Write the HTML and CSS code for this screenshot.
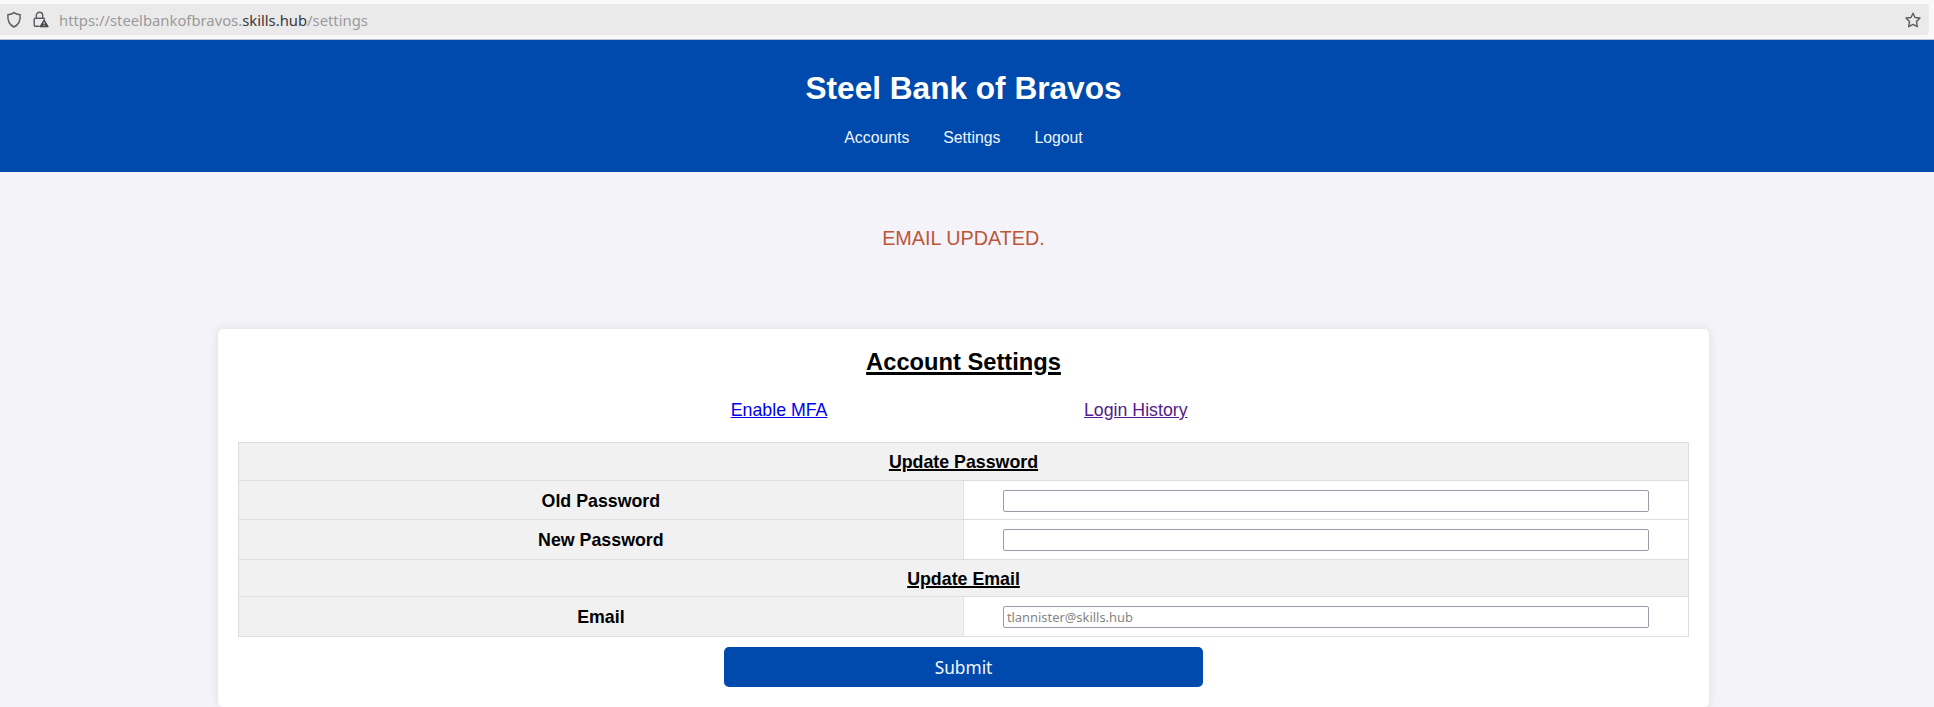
FILE: index.html
```html
<!DOCTYPE html>
<html lang="en">
<head>
<meta charset="utf-8">
<title>Steel Bank of Bravos</title>
<link rel="stylesheet" href="styles.css">
</head>
<body>
<div class="toolbar">
  <div class="address">
    <svg class="shield" viewBox="0 0 16 18" width="16" height="18"><path d="M8 1.600C6.300 3 4 3.500 1.900 3.700 1.400 9.500 3.200 13.700 8 16c4.800-2.300 6.600-6.500 6.100-12.300C12 3.500 9.700 3 8 1.600z"/></svg>
    <svg class="lock" viewBox="0 0 16 17" width="16" height="17"><path d="M3.300 7V4.500a3.200 3.200 0 0 1 6.400 0V7M6.500 15.300H2.600a1.400 1.400 0 0 1-1.400-1.400V8.600a1.400 1.400 0 0 1 1.400-1.400h7.800a1.400 1.400 0 0 1 1.300 1.200"/><path class="warn" d="M11.100 8.800 15.300 15.800H6.900z"/><path class="mark" d="M11.100 11v2.300M11.100 14v1"/></svg>
    <span class="url">https://steelbankofbravos.<span class="domain">skills.hub</span>/settings</span>
    <svg class="star" viewBox="0 0 16 16" width="16" height="16"><path d="M8 1.200 10 5.500 15 6 11.500 9.600 12.300 14.700 8 12.400 3.700 14.700 4.500 9.600 1 6 6 5.500z"/></svg>
  </div>
</div>
<header class="header">
  <h1 class="brand">Steel Bank of Bravos</h1>
  <nav class="nav"><a href="#">Accounts</a><a href="#">Settings</a><a href="#">Logout</a></nav>
</header>
<main class="page">
  <p class="status">EMAIL UPDATED.</p>
  <section class="card">
    <h2 class="title">Account Settings</h2>
    <div class="links"><a class="mfa" href="#">Enable MFA</a><a class="history" href="#">Login History</a></div>
    <form class="form">
      <div class="table">
        <div class="row section">Update Password</div>
        <div class="row"><label class="label" for="old">Old Password</label><div class="cell"><input id="old" type="password"></div></div>
        <div class="row"><label class="label" for="new">New Password</label><div class="cell"><input id="new" type="password"></div></div>
        <div class="row section">Update Email</div>
        <div class="row"><label class="label" for="email">Email</label><div class="cell"><input id="email" type="text" placeholder="tlannister@skills.hub"></div></div>
      </div>
      <button class="submit" type="button">Submit</button>
    </form>
  </section>
</main>
</body>
</html>
```
FILE: styles.css
```css
* { box-sizing: border-box; }
body {
  margin: 0;
  height: 707px;
  overflow: hidden;
  background: #f4f3f9;
  color: #000;
  font-family: "Liberation Sans", Arial, sans-serif;
}
.toolbar {
  height: 40px;
  padding: 4px 5px 4px 0;
  background: #f9f9fb;
  border-bottom: 1px solid #b9c3d4;
}
.address {
  display: flex;
  align-items: center;
  height: 31px;
  padding: 0 8px 0 6px;
  background: #eaeaea;
  border-radius: 0 4px 4px 0;
}
.address svg { flex: none; fill: none; stroke: #5b5b60; stroke-width: 1.400; }
.address .lock { margin-left: 11px; }
.lock .warn { fill: #45454a; stroke: #45454a; stroke-width: 1; stroke-linejoin: round; }
.lock .mark { stroke: #eaeaea; stroke-width: 1; }
.star { margin-left: auto; stroke-linejoin: round; }
.url {
  margin-left: 10px;
  color: #9a9a9c;
  font: 14.800px "Noto Sans", sans-serif;
  white-space: nowrap;
}
.domain { color: #38383d; }
.header {
  height: 132px;
  padding: 30px 7px 0 0;
  background: #004aad;
  color: #fff;
  text-align: center;
}
.brand { margin: 0; font-size: 31.600px; line-height: 37px; }
.nav { display: flex; justify-content: center; gap: 34px; margin-top: 22px; }
.nav a { color: #f0f4fb; font-size: 15.800px; line-height: 18px; text-decoration: none; }
.page { padding-right: 7px; }
.status {
  margin: 0;
  padding-top: 54px;
  color: #bd5637;
  font-size: 19.800px;
  line-height: 24px;
  text-align: center;
}
.card {
  width: 1490.500px;
  height: 378px;
  margin: 79px auto 0;
  padding: 19px 20px 0;
  background: #fff;
  border-radius: 5px;
  box-shadow: 0 0 10px rgba(0, 0, 0, .1);
}
.title { margin: 0; font-size: 23.700px; line-height: 28px; text-align: center; text-decoration: underline 2.500px; }
.links { display: flex; margin-top: 23px; padding-left: 492.500px; gap: 256.500px; font-size: 17.750px; line-height: 22px; }
.mfa { color: #0000ee; }
.history { color: #551a8b; }
.table { display: grid; grid-template-rows: 38px 39px 40px 37px 40px; margin-top: 21px; border: solid #ddd; border-width: 1px 1px 0; font-size: 17.800px; font-weight: bold; }
.row { display: grid; grid-template-columns: 1fr 1fr; border-bottom: 1px solid #ddd; }
.section { display: block; background: #f1f1f1; line-height: 38px; text-align: center; text-decoration: underline 2px; }
.label { display: flex; align-items: center; justify-content: center; padding-top: 2px; background: #f1f1f1; border-right: 1px solid #e2e2e2; }
.cell { display: flex; align-items: center; justify-content: center; padding: 1px 0 0 1px; }
.cell input {
  width: 646.500px;
  height: 22px;
  padding: 0 3px;
  border: 1px solid #9b9aa8;
  border-radius: 2px;
  background: #fff;
  font: 12.900px "Noto Sans", sans-serif;
}
.cell input::placeholder { color: #858585; }
.submit {
  display: block;
  width: 479px;
  height: 40px;
  margin: 10px auto 0;
  padding: 0;
  border: 0;
  border-radius: 5px;
  background: #004aad;
  color: #f4f7fc;
  font: 17.300px "Noto Sans", sans-serif;
}
```
